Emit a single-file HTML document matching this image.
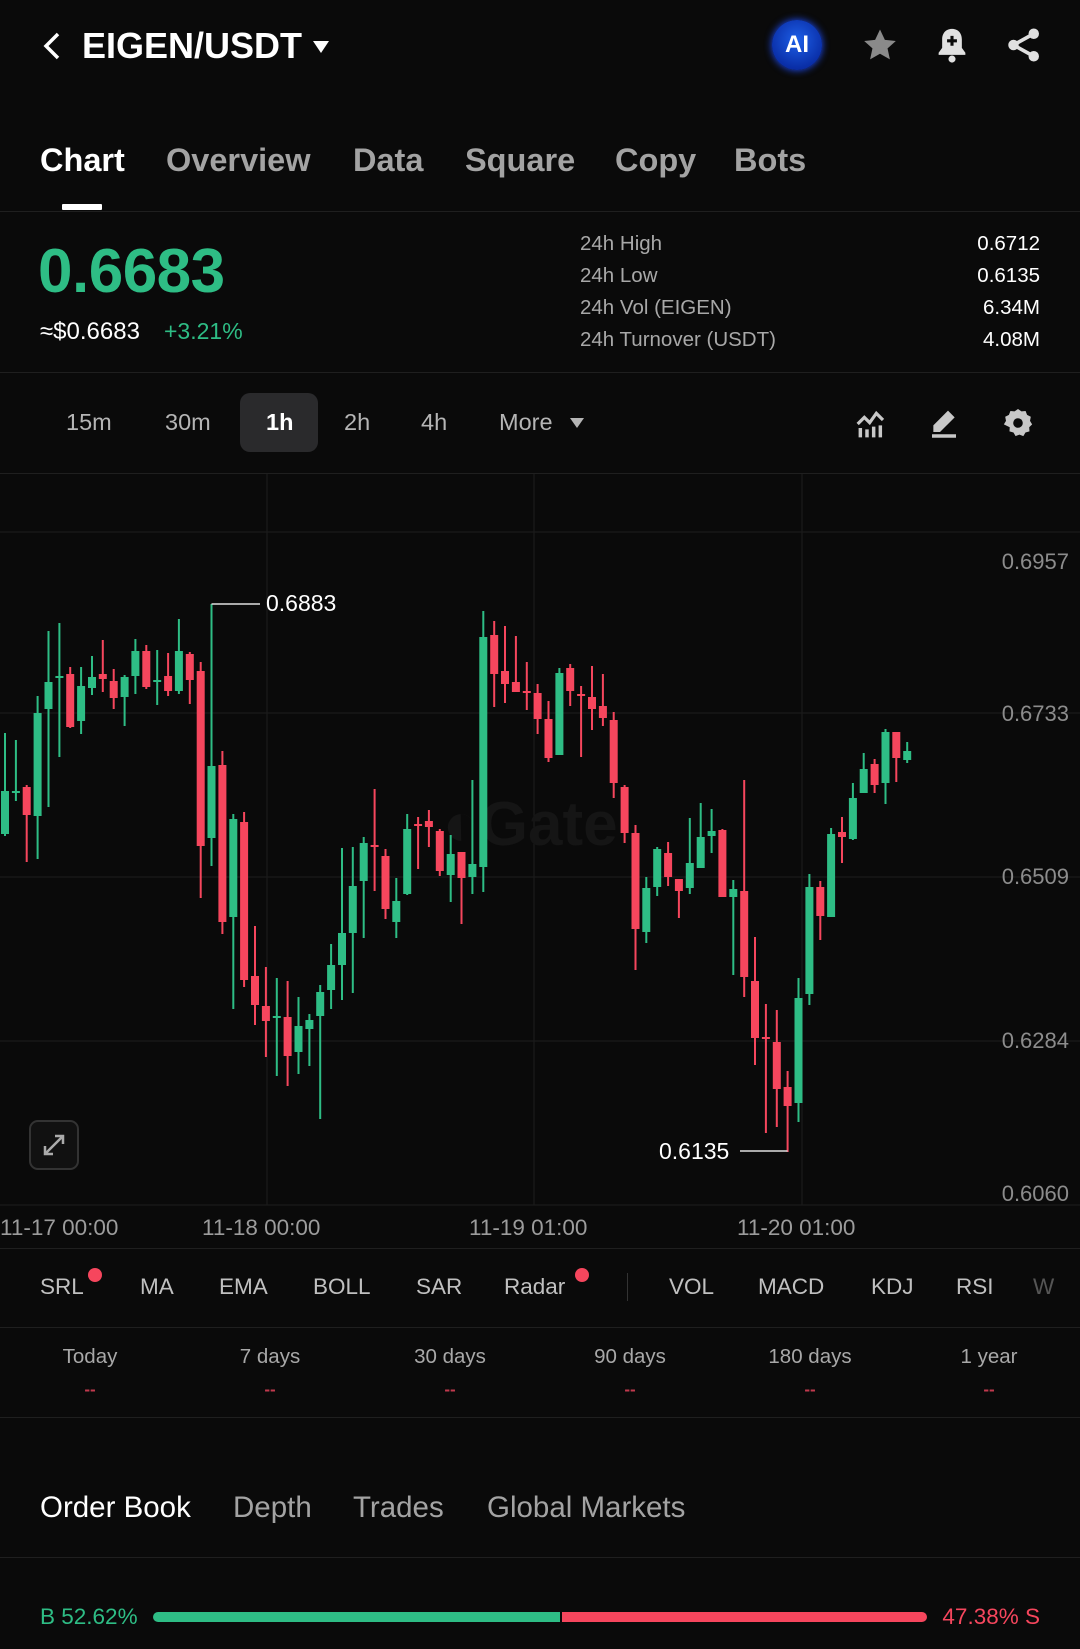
<!DOCTYPE html>
<html><head><meta charset="utf-8"><style>
*{margin:0;padding:0;box-sizing:border-box}
body{width:1080px;height:1649px;background:#0a0a0a;font-family:"Liberation Sans",sans-serif;color:#fff;position:relative;overflow:hidden}
.a{position:absolute;white-space:nowrap}
.hl{position:absolute;left:0;width:1080px;height:1px;background:#1f1f1f}
.tab{position:absolute;top:142px;font-size:32.5px;font-weight:bold;color:#a3a3a3}
.st{position:absolute;left:580px;font-size:20.5px;color:#a8a8a8}
.sv{position:absolute;right:40px;font-size:20.5px;color:#fff;text-align:right}
.iv{position:absolute;top:409px;font-size:23.5px;color:#b5b5b5}
.ind{position:absolute;top:1274px;font-size:22.5px;color:#c0c0c0}
.per{position:absolute;top:1345px;font-size:20.5px;color:#a8a8a8;transform:translateX(-50%)}
.dash{position:absolute;top:1380px;font-size:17px;font-weight:bold;color:#c0394d;transform:translateX(-50%)}
.ob{position:absolute;top:1491px;font-size:29.5px;color:#a3a3a3}
</style></head><body>

<svg class="a" style="left:40px;top:30px" width="24" height="32" viewBox="0 0 24 32"><path d="M18 4L6 16l12 12" stroke="#fff" stroke-width="3.5" fill="none"/></svg>
<div class="a" style="left:82px;top:25px;font-size:36px;font-weight:bold">EIGEN/USDT</div>
<svg class="a" style="left:312px;top:40px" width="18" height="14"><path d="M1 1h16L9 13z" fill="#fff"/></svg>
<div class="a" style="left:772px;top:20px;width:50px;height:50px;border-radius:50%;background:radial-gradient(circle at 50% 40%,#1d5fe8,#0a2fa8 70%,#0b1f80);box-shadow:0 0 8px #1f4fff;font-weight:bold;font-size:24px;line-height:50px;text-align:center">AI</div>
<svg class="a" style="left:862px;top:28px" width="36" height="34" viewBox="0 0 24 23"><path d="M12 1l3.3 7 7.4.8-5.6 5 1.6 7.4L12 17.4 5.3 21.2l1.6-7.4-5.6-5 7.4-.8z" fill="#8a8a8a"/></svg>
<svg class="a" style="left:935px;top:26px" width="34" height="38" viewBox="0 0 24 27"><path d="M12 2c-4.5 0-7 3.3-7 7.5v6L2.5 19v1.5h19V19L19 15.5v-6C19 5.3 16.5 2 12 2z" fill="#e0e0e0"/><circle cx="12" cy="23.5" r="2.5" fill="#e0e0e0"/><path d="M12 7v7M8.5 10.5h7" stroke="#0a0a0a" stroke-width="2.2"/></svg>
<svg class="a" style="left:1006px;top:27px" width="36" height="36" viewBox="0 0 24 24"><circle cx="18.5" cy="4.5" r="3.5" fill="#e0e0e0"/><circle cx="5" cy="12" r="3.5" fill="#e0e0e0"/><circle cx="18.5" cy="19.5" r="3.5" fill="#e0e0e0"/><path d="M18.5 4.5L5 12l13.5 7.5" stroke="#e0e0e0" stroke-width="2.4" fill="none"/></svg>

<div class="tab" style="left:40px;color:#fff">Chart</div>
<div class="tab" style="left:166px">Overview</div>
<div class="tab" style="left:353px">Data</div>
<div class="tab" style="left:465px">Square</div>
<div class="tab" style="left:615px">Copy</div>
<div class="tab" style="left:734px">Bots</div>
<div class="a" style="left:62px;top:204px;width:40px;height:6px;background:#fff;border-radius:1px"></div>
<div class="hl" style="top:211px"></div>

<div class="a" style="left:38px;top:236px;font-size:62px;font-weight:bold;color:#2ebd85;letter-spacing:-0.5px">0.6683</div>
<div class="a" style="left:40px;top:318px;font-size:24px">≈$0.6683</div>
<div class="a" style="left:164px;top:318px;font-size:23px;color:#2ebd85">+3.21%</div>
<div class="st" style="top:232px">24h High</div><div class="sv" style="top:232px">0.6712</div>
<div class="st" style="top:264px">24h Low</div><div class="sv" style="top:264px">0.6135</div>
<div class="st" style="top:296px">24h Vol (EIGEN)</div><div class="sv" style="top:296px">6.34M</div>
<div class="st" style="top:328px">24h Turnover (USDT)</div><div class="sv" style="top:328px">4.08M</div>
<div class="hl" style="top:372px"></div>

<div class="iv" style="left:66px">15m</div>
<div class="iv" style="left:165px">30m</div>
<div class="a" style="left:240px;top:393px;width:78px;height:59px;border-radius:10px;background:#2a2a2c"></div>
<div class="iv" style="left:266px;color:#fff;font-weight:bold">1h</div>
<div class="iv" style="left:344px">2h</div>
<div class="iv" style="left:421px">4h</div>
<div class="iv" style="left:499px">More</div>
<svg class="a" style="left:570px;top:418px" width="14" height="10"><path d="M0 0h14L7 10z" fill="#b5b5b5"/></svg>
<svg class="a" style="left:855px;top:408px" width="32" height="32" viewBox="0 0 24 24"><path d="M2 12l5-5 4 4 5-7 5 5" stroke="#c8c8c8" stroke-width="2.4" fill="none"/><path d="M4 15v7M9 16v6M14 14v8M19 13v9" stroke="#c8c8c8" stroke-width="2.6"/></svg>
<svg class="a" style="left:928px;top:408px" width="32" height="32" viewBox="0 0 24 24"><path d="M15 2l5 5L9 18H4v-5z" fill="#c8c8c8"/><path d="M3 21h18" stroke="#c8c8c8" stroke-width="2.6"/></svg>
<svg class="a" style="left:1002px;top:407px" width="32" height="32" viewBox="0 0 24 24"><path d="M12 1.5l2.6 1.8 3.1-.3 1.1 2.9 2.8 1.4-.6 3.1 1.6 2.6-2.2 2.2.2 3.1-3 .8-1.6 2.7-2.9-1.1-2.9 1.1-1.6-2.7-3-.8.2-3.1L1.4 13l1.6-2.6-.6-3.1 2.8-1.4 1.1-2.9 3.1.3z" fill="#c8c8c8"/><circle cx="12" cy="12" r="3.6" fill="#0a0a0a"/></svg>
<div class="hl" style="top:473px"></div>

<svg class="a" style="left:0;top:0" width="1080" height="1260">
<g stroke="#1b1b1b" stroke-width="1.2">
<path d="M267 474V1205M534 474V1205M802 474V1205M0 532H1080M0 713H1080M0 877H1080M0 1041H1080M0 1205H1080"/>
</g>
<text x="530" y="845" font-family="Liberation Sans" font-weight="bold" font-size="62" fill="#151515" text-anchor="middle">◐Gate</text>
<g font-family="Liberation Sans" font-size="22" fill="#8c8c8c" text-anchor="end">
<text x="1069" y="569">0.6957</text><text x="1069" y="721">0.6733</text><text x="1069" y="884">0.6509</text><text x="1069" y="1048">0.6284</text><text x="1069" y="1201">0.6060</text>
</g>
<g stroke="#2ebd85" stroke-width="2" fill="none">
<path d="M5 733V836M15.9 740V801M37.6 696V859M48.5 631V807M59.4 623V757M81.1 667V734M92 656V695M124.6 675V726M135.4 639V694M157.2 650V705M178.9 619V694M211.5 604V866M233.3 814V1009M276.8 978V1076M298.5 997V1074M309.4 1014V1066M320.2 985V1119M331.1 944V1009M342 848V1000M352.8 847V993M363.7 837V938M396.3 878V938M407.2 814V895M450.7 835V902M472.4 780V894M483.3 611V892M559.4 668V755M646.3 877V943M657.2 847V896M689.8 818V894M700.7 803V868M711.6 809V853M733.3 880V975M798.5 978V1122M809.4 874V1005M831.1 828V917M852.9 783V840M863.7 753V793M885.5 729V804M907.2 742V763"/>
</g>
<g stroke="#f6465d" stroke-width="2" fill="none">
<path d="M26.7 785V862M70.2 667V728M102.8 640V692M113.7 669V709M146.3 645V689M168.1 653V696M189.8 652V704M200.7 662V898M222.4 751V934M244.1 812V987M255 926V1025M265.9 967V1057M287.6 981V1086M374.6 789V891M385.5 849V919M418.1 817V869M428.9 810V847M439.8 829V876M461.5 852V924M494.2 621V707M505 626V703M515.9 636V692M526.8 662V710M537.6 684V734M548.5 701V762M570.2 664V706M581.1 686V757M592 666V730M602.9 674V726M613.7 712V798M624.6 785V843M635.5 825V970M668.1 842V886M678.9 880V918M722.4 829V897M744.2 780V997M755 937V1065M765.9 1004V1133M776.8 1010V1127M787.6 1071V1152M820.3 881V940M842 817V863M874.6 759V793M896.3 732V782"/>
</g>
<g fill="#2ebd85">
<rect x="1" y="791" width="8" height="43"/><rect x="11.9" y="791" width="8" height="2"/><rect x="33.6" y="713" width="8" height="103"/><rect x="44.5" y="682" width="8" height="27"/><rect x="55.4" y="676" width="8" height="2"/><rect x="77.1" y="686" width="8" height="35"/><rect x="88" y="677" width="8" height="11"/><rect x="120.6" y="677" width="8" height="20"/><rect x="131.4" y="651" width="8" height="25"/><rect x="153.2" y="680" width="8" height="2"/><rect x="174.9" y="651" width="8" height="40"/><rect x="207.5" y="766" width="8" height="72"/><rect x="229.3" y="819" width="8" height="98"/><rect x="272.8" y="1016" width="8" height="2"/><rect x="294.5" y="1026" width="8" height="26"/><rect x="305.4" y="1020" width="8" height="9"/><rect x="316.2" y="992" width="8" height="24"/><rect x="327.1" y="965" width="8" height="25"/><rect x="338" y="933" width="8" height="32"/><rect x="348.8" y="886" width="8" height="47"/><rect x="359.7" y="843" width="8" height="38"/><rect x="392.3" y="901" width="8" height="21"/><rect x="403.2" y="829" width="8" height="65"/><rect x="446.7" y="854" width="8" height="21"/><rect x="468.4" y="864" width="8" height="13"/><rect x="479.3" y="637" width="8" height="230"/><rect x="555.4" y="673" width="8" height="82"/><rect x="642.3" y="888" width="8" height="44"/><rect x="653.2" y="849" width="8" height="38"/><rect x="685.8" y="863" width="8" height="25"/><rect x="696.7" y="837" width="8" height="31"/><rect x="707.6" y="831" width="8" height="5"/><rect x="729.3" y="889" width="8" height="8"/><rect x="794.5" y="998" width="8" height="105"/><rect x="805.4" y="887" width="8" height="107"/><rect x="827.1" y="834" width="8" height="83"/><rect x="848.9" y="798" width="8" height="41"/><rect x="859.7" y="769" width="8" height="24"/><rect x="881.5" y="732" width="8" height="51"/><rect x="903.2" y="751" width="8" height="9"/>
</g>
<g fill="#f6465d">
<rect x="22.7" y="787" width="8" height="28"/><rect x="66.2" y="674" width="8" height="53"/><rect x="98.8" y="674" width="8" height="5"/><rect x="109.7" y="681" width="8" height="17"/><rect x="142.3" y="651" width="8" height="36"/><rect x="164.1" y="676" width="8" height="15"/><rect x="185.8" y="654" width="8" height="26"/><rect x="196.7" y="671" width="8" height="175"/><rect x="218.4" y="765" width="8" height="157"/><rect x="240.1" y="822" width="8" height="158"/><rect x="251" y="976" width="8" height="29"/><rect x="261.9" y="1006" width="8" height="15"/><rect x="283.6" y="1017" width="8" height="39"/><rect x="370.6" y="845" width="8" height="2"/><rect x="381.5" y="856" width="8" height="53"/><rect x="414.1" y="824" width="8" height="2"/><rect x="424.9" y="821" width="8" height="6"/><rect x="435.8" y="831" width="8" height="40"/><rect x="457.5" y="852" width="8" height="26"/><rect x="490.2" y="635" width="8" height="39"/><rect x="501" y="671" width="8" height="13"/><rect x="511.9" y="682" width="8" height="10"/><rect x="522.8" y="691" width="8" height="2"/><rect x="533.6" y="693" width="8" height="26"/><rect x="544.5" y="719" width="8" height="39"/><rect x="566.2" y="668" width="8" height="23"/><rect x="577.1" y="694" width="8" height="2"/><rect x="588" y="697" width="8" height="12"/><rect x="598.9" y="706" width="8" height="12"/><rect x="609.7" y="720" width="8" height="63"/><rect x="620.6" y="787" width="8" height="46"/><rect x="631.5" y="833" width="8" height="96"/><rect x="664.1" y="853" width="8" height="24"/><rect x="674.9" y="879" width="8" height="12"/><rect x="718.4" y="830" width="8" height="67"/><rect x="740.2" y="891" width="8" height="86"/><rect x="751" y="981" width="8" height="57"/><rect x="761.9" y="1037" width="8" height="2"/><rect x="772.8" y="1042" width="8" height="47"/><rect x="783.6" y="1087" width="8" height="19"/><rect x="816.3" y="887" width="8" height="29"/><rect x="838" y="832" width="8" height="5"/><rect x="870.6" y="764" width="8" height="21"/><rect x="892.3" y="732" width="8" height="26"/>
</g>
<path d="M211.5 604H260M740 1151H787.6" stroke="#e0e0e0" stroke-width="1.5"/>
<g font-family="Liberation Sans" font-size="23" fill="#fff">
<text x="266" y="611">0.6883</text><text x="659" y="1159">0.6135</text>
</g>
<g font-family="Liberation Sans" font-size="22.5" fill="#9c9c9c">
<text x="0" y="1235">11-17 00:00</text><text x="202" y="1235">11-18 00:00</text><text x="469" y="1235">11-19 01:00</text><text x="737" y="1235">11-20 01:00</text>
</g>
<rect x="30" y="1121" width="48" height="48" rx="8" fill="#111" stroke="#333" stroke-width="2"/>
<path d="M45 1154l18-18M55 1136h8v8M45 1146v8h8" stroke="#aaa" stroke-width="2.5" fill="none"/>
</svg>
<div class="hl" style="top:1248px"></div>

<div class="ind" style="left:40px">SRL</div><div class="a" style="left:88px;top:1268px;width:14px;height:14px;border-radius:50%;background:#f6465d"></div>
<div class="ind" style="left:140px">MA</div>
<div class="ind" style="left:219px">EMA</div>
<div class="ind" style="left:313px">BOLL</div>
<div class="ind" style="left:416px">SAR</div>
<div class="ind" style="left:504px">Radar</div><div class="a" style="left:575px;top:1268px;width:14px;height:14px;border-radius:50%;background:#f6465d"></div>
<div class="a" style="left:627px;top:1273px;width:1px;height:28px;background:#333"></div>
<div class="ind" style="left:669px">VOL</div>
<div class="ind" style="left:758px">MACD</div>
<div class="ind" style="left:871px">KDJ</div>
<div class="ind" style="left:956px">RSI</div>
<div class="ind" style="left:1033px;color:#555">W</div>
<div class="hl" style="top:1327px"></div>

<div class="per" style="left:90px">Today</div><div class="dash" style="left:90px">--</div>
<div class="per" style="left:270px">7 days</div><div class="dash" style="left:270px">--</div>
<div class="per" style="left:450px">30 days</div><div class="dash" style="left:450px">--</div>
<div class="per" style="left:630px">90 days</div><div class="dash" style="left:630px">--</div>
<div class="per" style="left:810px">180 days</div><div class="dash" style="left:810px">--</div>
<div class="per" style="left:989px">1 year</div><div class="dash" style="left:989px">--</div>
<div class="hl" style="top:1417px"></div>

<div class="ob" style="left:40px;color:#fff">Order Book</div>
<div class="ob" style="left:233px">Depth</div>
<div class="ob" style="left:353px">Trades</div>
<div class="ob" style="left:487px">Global Markets</div>
<div class="hl" style="top:1557px"></div>

<div class="a" style="left:40px;top:1604px;font-size:22.5px;color:#2ebd85">B 52.62%</div>
<div class="a" style="left:153px;top:1612px;width:407px;height:10px;border-radius:5px 0 0 5px;background:#2ebd85"></div>
<div class="a" style="left:562px;top:1612px;width:365px;height:10px;border-radius:0 5px 5px 0;background:#f6465d"></div>
<div class="a" style="right:40px;top:1604px;font-size:22.5px;color:#f6465d">47.38% S</div>
</body></html>
